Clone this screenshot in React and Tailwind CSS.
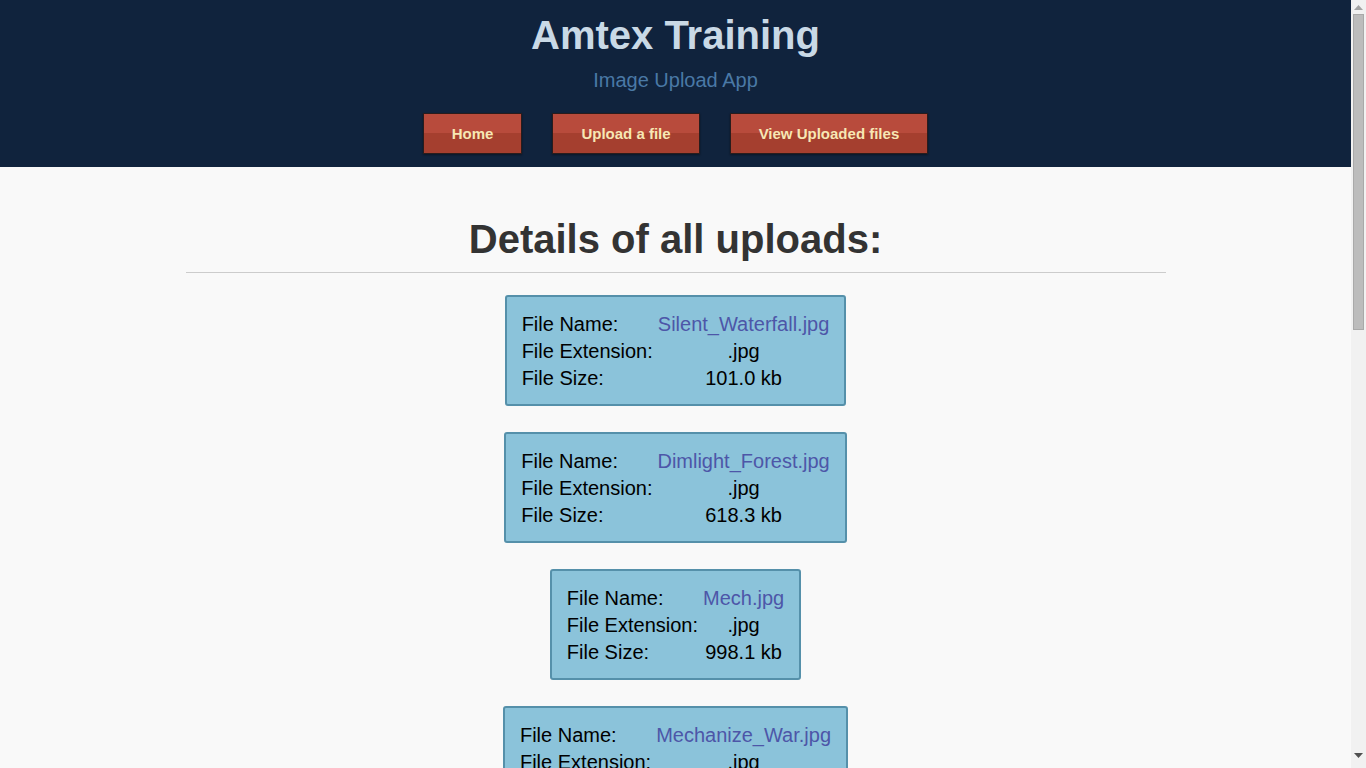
const NAV = ['Home', 'Upload a file', 'View Uploaded files'];

const UPLOADS = [
  { name: 'Silent_Waterfall.jpg', ext: '.jpg', size: '101.0 kb' },
  { name: 'Dimlight_Forest.jpg', ext: '.jpg', size: '618.3 kb' },
  { name: 'Mech.jpg', ext: '.jpg', size: '998.1 kb' },
  { name: 'Mechanize_War.jpg', ext: '.jpg', size: '845.6 kb' },
  { name: 'Night_City.jpg', ext: '.jpg', size: '402.7 kb' },
  { name: 'Mountain_Lake.jpg', ext: '.jpg', size: '733.9 kb' },
  { name: 'Robot_Arm.jpg', ext: '.jpg', size: '256.4 kb' },
  { name: 'Desert_Storm.jpg', ext: '.jpg', size: '512.2 kb' },
  { name: 'Sunset.jpg', ext: '.jpg', size: '189.5 kb' },
  { name: 'Old_Bridge.jpg', ext: '.jpg', size: '377.0 kb' },
];

function UploadCard({ file }) {
  return (
    <div className="inline-grid grid-cols-[auto_auto] gap-x-[5px] border-2 border-[#5590aa] rounded-[3px] bg-[#8bc3da] px-[15px] pt-[14px] pb-[12px] text-[20px] leading-[27px] text-black">
      <span>File Name:</span>
      <span className="text-center text-[#4d56a8]">{file.name}</span>
      <span>File Extension:</span>
      <span className="text-center">{file.ext}</span>
      <span>File Size:</span>
      <span className="text-center">{file.size}</span>
    </div>
  );
}

// fake window scrollbar, the page is scrolled to the top
function Scrollbar() {
  return (
    <div className="w-[15px] shrink-0 h-screen bg-[#f1f1f1] flex flex-col items-center">
      <svg width="9" height="5" viewBox="0 0 9 5" className="mt-[5px]">
        <path d="M0 5 L4.5 0 L9 5 Z" fill="#a3a3a3" />
      </svg>
      <div className="mt-[4px] w-[11px] h-[316px] bg-[#bcbcbc] border border-[#a9a9a9]" />
      <div className="flex-1" />
      <svg width="9" height="5" viewBox="0 0 9 5" className="mb-[10px]">
        <path d="M0 0 L9 0 L4.5 5 Z" fill="#505050" />
      </svg>
    </div>
  );
}

export default function App() {
  return (
    <div className="h-screen overflow-hidden flex bg-[#f9f9f9] font-['Liberation_Sans',Arial,sans-serif]">
      <div className="flex-1 min-w-0">
        {/* header */}
        <header className="bg-[#10233d] h-[167px] flex flex-col items-center">
          <h1 className="mt-[11px] text-[40px] leading-[48px] font-bold text-[#c9d9e6]">Amtex Training</h1>
          <p className="mt-[9px] text-[20px] leading-[24px] text-[#4a79a6]">Image Upload App</p>
          <nav className="mt-[21px] flex gap-[30px]">
            {NAV.map((label) => (
              <a
                key={label}
                href="#"
                className="h-[41px] px-[28px] pt-[1px] flex items-center border border-[#2a1c1c] bg-[linear-gradient(to_bottom,#b84b3c_0%,#b84b3c_50%,#a53f2f_50%,#a53f2f_100%)] text-[15px] font-bold text-[#f7e7b4] shadow-[0_1px_2px_rgba(0,0,0,0.4)]"
              >
                {label}
              </a>
            ))}
          </nav>
        </header>

        {/* uploads */}
        <main className="w-[980px] mx-auto pb-[26px]">
          <h2 className="pt-[47px] pb-[8px] text-center text-[40px] leading-[50px] font-bold text-[#333333] border-b border-[#cccccc]">
            Details of all uploads:
          </h2>
          <div className="mt-[22px] flex flex-col items-center gap-[26px]">
            {UPLOADS.map((file) => (
              <UploadCard key={file.name} file={file} />
            ))}
          </div>
        </main>
      </div>
      <Scrollbar />
    </div>
  );
}
